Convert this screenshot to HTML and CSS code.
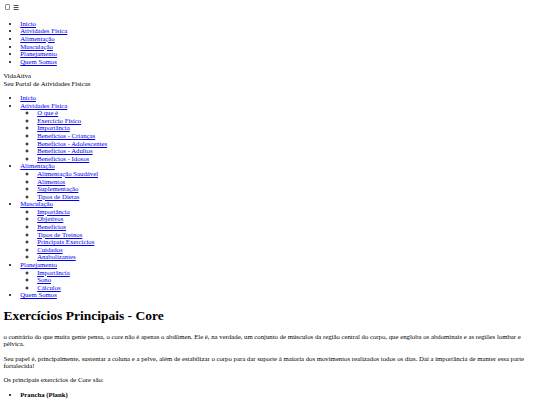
FILE: index.html
```html
<!DOCTYPE html>
<html lang="pt-BR">
<head>
<meta charset="utf-8">
<title>VidaAtiva</title>
<link rel="stylesheet" href="styles.css">
</head>
<body class="page">
<input type="checkbox" id="menu-toggle" class="menu-toggle"><label for="menu-toggle" class="menu-icon">☰</label>
<ul class="menu">
  <li><a href="#">Início</a></li>
  <li><a href="#">Atividades Física</a></li>
  <li><a href="#">Alimentação</a></li>
  <li><a href="#">Musculação</a></li>
  <li><a href="#">Planejamento</a></li>
  <li><a href="#">Quem Somos</a></li>
</ul>
<div class="brand">
  <div class="brand-name">VidaAtiva</div>
  <div class="brand-tag">Seu Portal de Atividades Físicas</div>
</div>
<ul class="menu">
  <li><a href="#">Início</a></li>
  <li><a href="#">Atividades Física</a>
    <ul class="submenu">
      <li><a href="#">O que é</a></li>
      <li><a href="#">Exercício Físico</a></li>
      <li><a href="#">Importância</a></li>
      <li><a href="#">Benefícios - Crianças</a></li>
      <li><a href="#">Benefícios - Adolescentes</a></li>
      <li><a href="#">Benefícios - Adultos</a></li>
      <li><a href="#">Benefícios - Idosos</a></li>
    </ul>
  </li>
  <li><a href="#">Alimentação</a>
    <ul class="submenu">
      <li><a href="#">Alimentação Saudável</a></li>
      <li><a href="#">Alimentos</a></li>
      <li><a href="#">Suplementação</a></li>
      <li><a href="#">Tipos de Dietas</a></li>
    </ul>
  </li>
  <li><a href="#">Musculação</a>
    <ul class="submenu">
      <li><a href="#">Importância</a></li>
      <li><a href="#">Objetivos</a></li>
      <li><a href="#">Benefícios</a></li>
      <li><a href="#">Tipos de Treinos</a></li>
      <li><a href="#">Principais Exercícios</a></li>
      <li><a href="#">Cuidados</a></li>
      <li><a href="#">Anabolizantes</a></li>
    </ul>
  </li>
  <li><a href="#">Planejamento</a>
    <ul class="submenu">
      <li><a href="#">Importância</a></li>
      <li><a href="#">Sono</a></li>
      <li><a href="#">Cálculos</a></li>
    </ul>
  </li>
  <li><a href="#">Quem Somos</a></li>
</ul>
<h1 class="title">Exercícios Principais - Core</h1>
<p class="text">o contrário do que muita gente pensa, o core não é apenas o abdômen. Ele é, na verdade, um conjunto de músculos da região central do corpo, que engloba os abdominais e as regiões lombar e pélvica.</p>
<p class="text">Seu papel é, principalmente, sustentar a coluna e a pelve, além de estabilizar o corpo para dar suporte à maioria dos movimentos realizados todos os dias. Daí a importância de manter essa parte fortalecida!</p>
<p class="text">Os principais exercícios de Core são:</p>
<ul class="menu">
  <li><strong>Prancha (Plank)</strong></li>
</ul>
</body>
</html>
```
FILE: styles.css
```css
html {
  font-size: 6.75px;
}
.page {
  margin: 0.5em;
  font-family: "Liberation Serif", "Times New Roman", serif;
  font-size: 1rem;
  line-height: 7.6px;
  color: #000;
  background: #fff;
}
.menu-toggle {
  -webkit-appearance: none;
  appearance: none;
  box-sizing: border-box;
  display: inline-block;
  width: 5.5px;
  height: 5.5px;
  margin: 1px 2.5px 1px 1.5px;
  border: 0.6px solid #8a8a8a;
  border-radius: 1px;
  background: #fff;
  vertical-align: -0.5px;
}
.menu-icon {
  font-family: "DejaVu Sans", sans-serif;
  color: #222;
}
.menu {
  margin: 1em 0;
  padding-left: 2.5em;
  list-style-type: disc;
}
.submenu {
  margin: 0;
  padding-left: 2.5em;
  list-style-type: circle;
}
.title {
  font-size: 2em;
  font-weight: bold;
  line-height: 1.15;
  margin: 0.67em 0;
}
.text {
  margin: 1em 0;
}
```
